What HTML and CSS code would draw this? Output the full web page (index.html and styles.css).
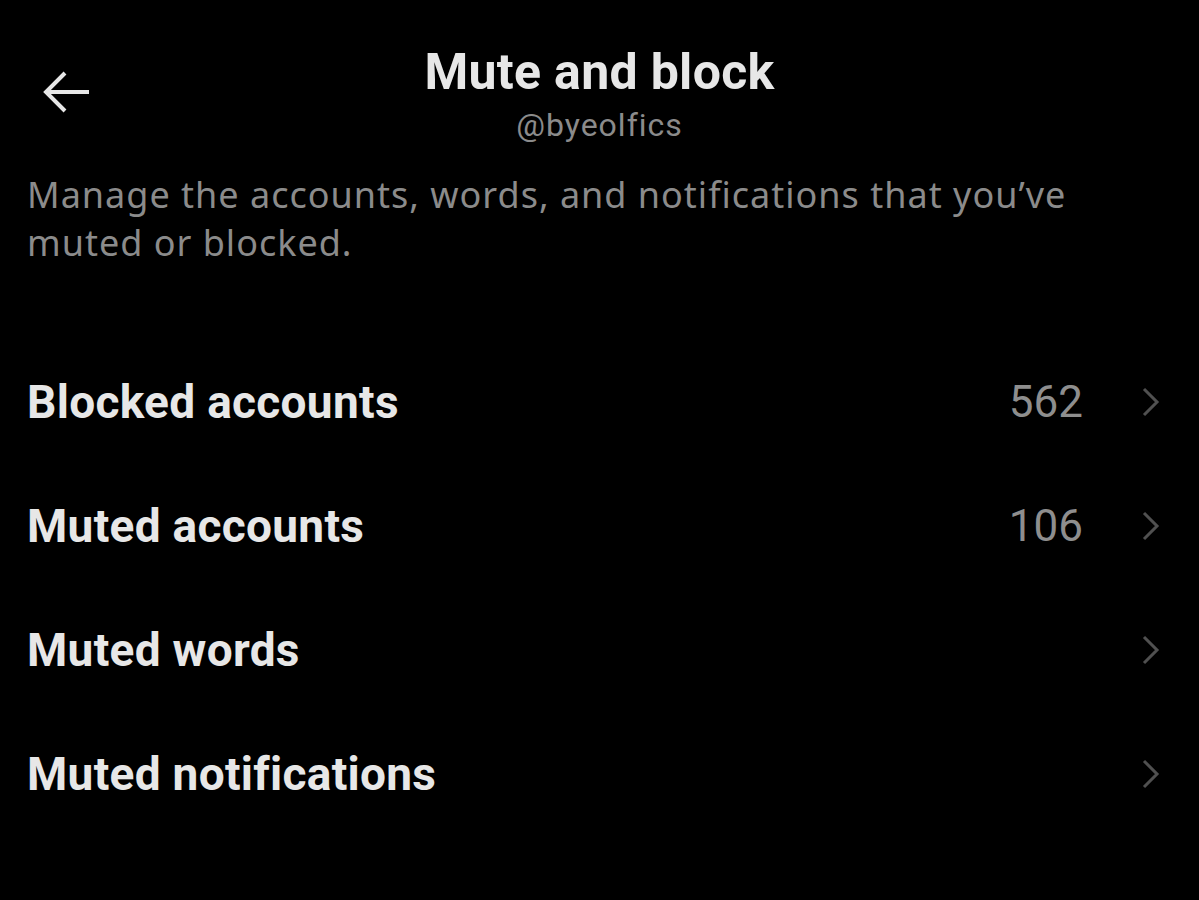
FILE: index.html
```html
<!DOCTYPE html>
<html>
<head>
<meta name="viewport" content="width=device-width, initial-scale=1">
<link rel="stylesheet" href="styles.css">
</head>
<body>

<div class="header">
  <div class="back">
    <svg width="48" height="42" viewBox="0 0 48 42">
      <path d="M46 21H3M22 2L3 21l19 19" fill="none" stroke="#e7e7e7" stroke-width="4"/>
    </svg>
  </div>
  <div class="title-box">
    <div class="title">Mute and block</div>
    <div class="handle">@byeolfics</div>
  </div>
  <div></div>
</div>

<p class="desc">Manage the accounts, words, and notifications that you’ve muted or blocked.</p>

<!-- settings rows -->
<div class="list">
  <div class="row">
    <span class="label">Blocked accounts</span>
    <span class="count">562</span>
    <svg class="chev" width="20" height="30" viewBox="0 0 20 30"><path d="M3 2l13 13L3 28" fill="none" stroke="#505050" stroke-width="3"/></svg>
  </div>
  <div class="row">
    <span class="label">Muted accounts</span>
    <span class="count">106</span>
    <svg class="chev" width="20" height="30" viewBox="0 0 20 30"><path d="M3 2l13 13L3 28" fill="none" stroke="#505050" stroke-width="3"/></svg>
  </div>
  <div class="row">
    <span class="label">Muted words</span>
    <span class="count"></span>
    <svg class="chev" width="20" height="30" viewBox="0 0 20 30"><path d="M3 2l13 13L3 28" fill="none" stroke="#505050" stroke-width="3"/></svg>
  </div>
  <div class="row">
    <span class="label">Muted notifications</span>
    <span class="count"></span>
    <svg class="chev" width="20" height="30" viewBox="0 0 20 30"><path d="M3 2l13 13L3 28" fill="none" stroke="#505050" stroke-width="3"/></svg>
  </div>
</div>

</body>
</html>
```

FILE: styles.css
```css
body {
  margin: 0;
  background: #000;
  color: #e7e7e7;
  font-family: Roboto, "Liberation Sans", sans-serif;
  width: 1199px;
  height: 900px;
  overflow: hidden;
}

.header {
  display: grid;
  grid-template-columns: 1fr auto 1fr;
  align-items: start;
  padding-top: 44px;
}

.back {
  padding: 27px 0 0 43px;
  line-height: 0;
}

.title-box {
  text-align: center;
}

.title {
  font-weight: 700;
  font-size: 50px;
  line-height: 56px;
  letter-spacing: 0.3px;
}

.handle {
  margin-top: 5px;
  font-size: 32px;
  line-height: 40px;
  letter-spacing: 1px;
  color: #8b8b8b;
}

.desc {
  margin: 26px 0 0;
  padding: 0 27px;
  font-family: "Noto Sans", sans-serif;
  font-size: 36px;
  line-height: 48px;
  letter-spacing: 1px;
  color: #8b8b8b;
  max-width: 1080px;
}

.list {
  margin-top: 73px;
}

.row {
  display: flex;
  align-items: center;
  height: 124px;
  padding: 0 38px 0 27px;
}

.label {
  flex: 1;
  font-weight: 700;
  font-size: 46px;
  letter-spacing: 0.3px;
}

.count {
  font-size: 44px;
  color: #8e8e8e;
  margin-right: 58px;
}

.chev {
  flex: none;
}
```
